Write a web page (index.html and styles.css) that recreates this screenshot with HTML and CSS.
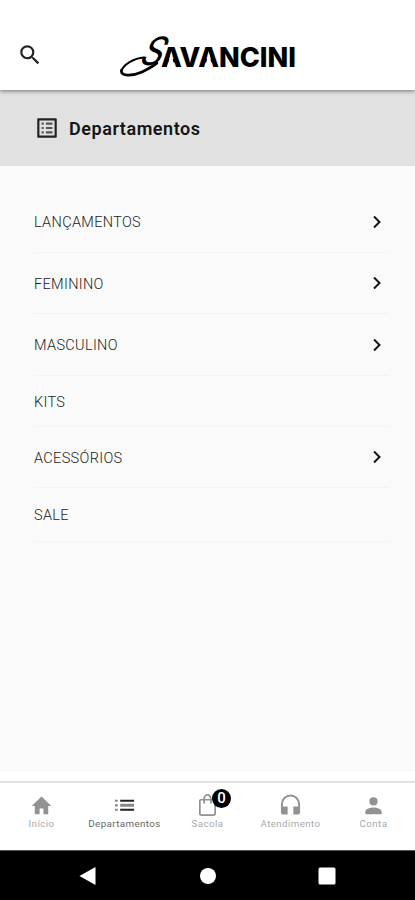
FILE: index.html
```html
<!DOCTYPE html>
<html lang="pt-BR">
<head>
<meta charset="utf-8">
<title>Savancini</title>
<link rel="stylesheet" href="styles.css">
</head>
<body>
<div class="app">
  <header class="header">
    <svg class="search" viewBox="0 0 24 24"><path d="M15.500 14h-.79l-.28-.27A6.470 6.470 0 0 0 16 9.500 6.500 6.500 0 1 0 9.500 16c1.610 0 3.090-.59 4.230-1.570l.27.28v.79l5 4.990L20.490 19zm-6 0a4.500 4.500 0 1 1 0-9 4.500 4.500 0 0 1 0 9z"/></svg>
    <svg class="logo" viewBox="0 0 178 46">
      <path class="swash" d="M24 24.500C14 25 3 32 1.500 38"/>
      <path class="swash-heavy" d="M1.500 37C0 44 13 43 22 39C28 36 34 33 37 30"/>
      <text class="initial" transform="translate(17.500 32) skewX(-27)" textLength="21" lengthAdjust="spacingAndGlyphs">S</text>
      <text class="wordmark" x="41" y="33.500" textLength="135" lengthAdjust="spacingAndGlyphs">AVANCINI</text>
      <path class="notch" d="M51 20l3.800 14h-7.600zM88.800 20l3.800 14H85z"/>
    </svg>
  </header>
  <div class="title">
    <svg class="title-icon" viewBox="0 0 24 24"><path d="M19 5v14H5V5h14m1.100-2H3.900c-.5 0-.9.4-.9.9v16.200c0 .4.4.9.9.9h16.200c.4 0 .9-.5.9-.9V3.900c0-.5-.5-.9-.9-.9z"/><path class="lines" d="M11 7h6v2h-6V7zm0 4h6v2h-6v-2zm0 4h6v2h-6zM7 7h2v2H7zm0 4h2v2H7zm0 4h2v2H7z"/></svg>
    <h1>Departamentos</h1>
  </div>
  <main class="content">
    <ul class="list">
      <li class="row"><span>LANÇAMENTOS</span><svg class="chevron" viewBox="0 0 10 14"><path d="M2 1.500 7.500 7 2 12.500"/></svg></li>
      <li class="row"><span>FEMININO</span><svg class="chevron" viewBox="0 0 10 14"><path d="M2 1.500 7.500 7 2 12.500"/></svg></li>
      <li class="row"><span>MASCULINO</span><svg class="chevron" viewBox="0 0 10 14"><path d="M2 1.500 7.500 7 2 12.500"/></svg></li>
      <li class="row plain"><span>KITS</span></li>
      <li class="row"><span>ACESSÓRIOS</span><svg class="chevron" viewBox="0 0 10 14"><path d="M2 1.500 7.500 7 2 12.500"/></svg></li>
      <li class="row last"><span>SALE</span></li>
    </ul>
  </main>
  <nav class="tabs">
    <div class="tab"><svg viewBox="0 0 24 24"><path d="M10 21v-6h4v6h5v-8.500h3.200L12 2.500 1.800 12.500H5V21z"/></svg><span>Início</span></div>
    <div class="tab active"><svg viewBox="0 0 24 24"><path d="M7.500 6H22v2.200H7.500zM7.500 15.300H22v2.200H7.500z"/><path class="dots" d="M7.500 10.200H22v3H7.500zM2 6h3v2.200H2zM2 10.600h3v2.400H2zM2 15.300h3v2.200H2z"/></svg><span>Departamentos</span></div>
    <div class="tab"><div class="bag"><svg viewBox="0 0 24 24"><path class="line" d="M5 6h14q1 0 1 1v13q0 2-2 2H6q-2 0-2-2V7q0-1 1-1zM8.500 10V5a3.500 4 0 0 1 7 0v5"/></svg><b class="badge">0</b></div><span>Sacola</span></div>
    <div class="tab"><svg viewBox="0 0 24 24"><path d="M12 .5a10 10 0 0 0-10 10V19c0 1.500 1 2.500 2.500 2.500H9v-8.500H4v-2.500a8 8 0 0 1 16 0V13h-5v8.500h4.500c1.500 0 2.500-1 2.500-2.500v-8.500a10 10 0 0 0-10-10z"/></svg><span>Atendimento</span></div>
    <div class="tab"><svg viewBox="0 0 24 24"><path d="M12 12a4.300 4.300 0 1 0 0-8.600 4.300 4.300 0 0 0 0 8.600zm0 2c-2.670 0-8.500 1.340-8.500 4.200V21h17v-2.800c0-2.860-5.830-4.200-8.500-4.200z"/></svg><span>Conta</span></div>
  </nav>
  <footer class="system">
    <svg viewBox="0 0 18 18"><path d="M16.500 0v18L.5 9z"/></svg>
    <svg viewBox="0 0 18 18"><circle cx="9" cy="9" r="8"/></svg>
    <svg viewBox="0 0 18 18"><rect x=".5" y=".5" width="17" height="17" rx="1.500"/></svg>
  </footer>
</div>
</body>
</html>
```
FILE: styles.css
```css
* { box-sizing: border-box; }
body { margin: 0; font-family: Roboto, "Liberation Sans", sans-serif; background: #fff; }
.app { width: 415px; height: 900px; display: flex; flex-direction: column; overflow: hidden; }
.header {
  height: 90px; flex: none; display: flex; align-items: flex-start;
  padding: 33px 0 0 17px; background: #fff; position: relative;
  box-shadow: 0 1px 4px rgba(0, 0, 0, .5);
}
.search { width: 26px; height: 26px; margin-top: 9px; fill: #222; }
.logo { width: 178px; height: 46px; margin-left: 77px; overflow: visible; }
.swash { fill: none; stroke: #000; stroke-width: 2; stroke-linecap: round; }
.swash-heavy { fill: none; stroke: #000; stroke-width: 2.6; stroke-linecap: round; }
.initial { font: 400 40px Roboto, sans-serif; }
.wordmark { font: 800 27px Inter, sans-serif; }
.notch { fill: #fff; }
.title {
  height: 76px; flex: none; display: flex; align-items: center; gap: 9px;
  padding-left: 34px; background: #e1e1e1;
}
.title-icon { width: 26px; height: 26px; fill: #222; }
.title-icon .lines { fill: #555; }
h1 { margin: 0; font-size: 18px; font-weight: 600; letter-spacing: .55px; color: #151515; }
.content { height: 606px; flex: none; padding: 25px 26px 0 34px; background: #fafafa; }
.list { list-style: none; margin: 0; padding: 0; }
.row {
  height: 61.5px; display: flex; align-items: center; justify-content: space-between;
  padding: 1px 7px 0 0; border-bottom: 1px solid #f3f3f3;
  font-size: 14.5px; font-weight: 300; letter-spacing: .33px; color: #1c1c1c;
}
.row span { padding-top: 2px; }
.plain { height: 51px; }
.last { height: 54px; }
.last span { padding-top: 0; }
.chevron { width: 10px; height: 14px; fill: none; stroke: #151515; stroke-width: 2; }
.tabs {
  height: 69px; flex: none; margin-top: 9px; display: flex;
  padding-top: 11px; border-top: 2px solid #e2e2e2; background: #fff;
}
.tab {
  width: 83px; display: flex; flex-direction: column; align-items: center;
  font-size: 9.8px; line-height: 14px; letter-spacing: .38px; color: #aaa;
}
.tab svg { width: 23px; height: 23px; display: block; fill: #929292; }
.tab.active { color: #666; }
.tab.active svg { fill: #222; }
.tab.active .dots { fill: #888; }
.bag { position: relative; }
.bag .line { fill: none; stroke: #929292; stroke-width: 1.8; }
.badge {
  position: absolute; left: 16px; top: -5px; width: 19px; height: 19px;
  border-radius: 50%; background: #000; color: #fff;
  font-size: 15px; font-weight: 500; line-height: 19px; letter-spacing: 0; text-align: center;
}
.system {
  flex: 1; display: flex; justify-content: space-between; align-items: center;
  padding: 0 79px 0 79px; background: #000; border-top: 1px solid #555;
}
.system svg { width: 18px; height: 18px; fill: #fff; }
```
